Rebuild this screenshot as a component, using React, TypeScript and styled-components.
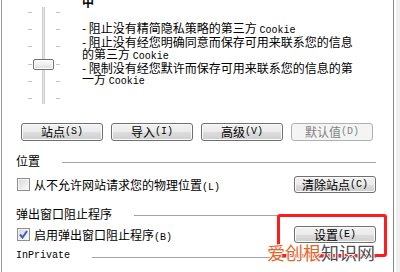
import React from "react";
import styled, { createGlobalStyle } from "styled-components";

const Global = createGlobalStyle`
  html, body { margin: 0; padding: 0; background: #fff; }
  body {
    font-family: "Noto Sans CJK SC", "Liberation Sans", sans-serif;
    font-size: 12px;
    color: #000;
  }
`;

const Screen = styled.div`
  position: relative;
  width: 400px;
  height: 272px;
  overflow: hidden;
  background: #fff;
  display: flex;
`;

const Panel = styled.div`
  margin-left: 1px;
  width: 391px;
  border-left: 1px solid #9c9c9c;
  border-right: 1px solid #86868f;
  display: flex;
  flex-direction: column;
`;

const Gutter = styled.div`
  margin-left: 2px;
  width: 4px;
  background: #efefef;
`;

const Top = styled.div`
  display: flex;
  align-items: flex-start;
  height: 110px;
`;

const SliderBox = styled.div`
  position: relative;
  display: flex;
  width: 34px;
  height: 97px;
  margin-top: 7px;
  margin-left: 25px;
`;

const TickCol = styled.div<{ $ml: number }>`
  display: flex;
  flex-direction: column;
  justify-content: space-between;
  width: 4px;
  margin-left: ${(p) => p.$ml}px;
  padding: 5px 0;
  box-sizing: border-box;
  height: 100%;
`;

const Tick = styled.div`
  height: 1px;
  background: #c4c4c4;
`;

const Track = styled.div`
  margin-left: 10px;
  width: 3px;
  height: 100%;
  background: #e4e4e4;
  box-shadow: inset 1px 0 0 #cfcfcf, inset -1px 0 0 #cfcfcf;
`;

const Thumb = styled.div`
  position: absolute;
  left: 6px;
  top: 52px;
  width: 21px;
  height: 11px;
  box-sizing: border-box;
  border: 1px solid #707070;
  border-radius: 2px;
  background: linear-gradient(#fbfbfb 0%, #eeeeee 50%, #dcdcdc 100%);
  box-shadow: inset 0 0 0 1px #fff;
`;

const TextCol = styled.div`
  margin-left: 21px;
  margin-top: -4px;
  display: flex;
  flex-direction: column;
  white-space: nowrap;
`;

const Level = styled.div`
  font-weight: bold;
  line-height: 12px;
  margin-bottom: 14px;
`;

const Desc = styled.div`
  line-height: 11.25px;
`;

const Lat = styled.span`
  font-family: "Liberation Mono", monospace;
  font-size: 10px;
`;

const ButtonRow = styled.div`
  display: flex;
  gap: 8px;
  margin-top: 13px;
  padding-left: 19px;
  height: 18px;
`;

const Btn = styled.div<{ $disabled?: boolean; $h?: number }>`
  width: 82px;
  height: ${(p) => p.$h ?? 18}px;
  box-sizing: border-box;
  display: flex;
  align-items: center;
  justify-content: center;
  border: 1px solid ${(p) => (p.$disabled ? "#adb2b5" : "#707070")};
  border-radius: 3px;
  background: ${(p) =>
    p.$disabled
      ? "#f4f4f4"
      : "linear-gradient(#f2f2f2 0%, #ebebeb 50%, #dddddd 51%, #cfcfcf 100%)"};
  box-shadow: inset 0 0 0 1px ${(p) => (p.$disabled ? "#f4f4f4" : "#fbfbfb")};
  color: ${(p) => (p.$disabled ? "#838383" : "#000")};
  line-height: 12px;
  white-space: nowrap;
`;

const Header = styled.div<{ $mt: number; $h: number }>`
  display: flex;
  align-items: center;
  gap: 22px;
  margin-top: ${(p) => p.$mt}px;
  height: ${(p) => p.$h}px;
  line-height: ${(p) => p.$h}px;
  padding-left: 14px;
  margin-right: 17px;
  white-space: nowrap;
`;

const Rule = styled.div<{ $off: number }>`
  flex: 1;
  height: 1px;
  background: #a3a3a3;
  margin-top: ${(p) => p.$off}px;
`;

const MonoTitle = styled.span`
  font-family: "Liberation Mono", monospace;
  font-size: 10px;
`;

const CheckRow = styled.div<{ $mt: number }>`
  display: flex;
  align-items: center;
  justify-content: space-between;
  margin-top: ${(p) => p.$mt}px;
  height: 17px;
  padding-left: 15px;
  margin-right: 17px;
`;

const CheckLabel = styled.div`
  display: flex;
  align-items: center;
  gap: 4px;
  white-space: nowrap;
`;

const Box = styled.span`
  position: relative;
  width: 13px;
  height: 13px;
  box-sizing: border-box;
  border: 1px solid #8e8f8f;
  background: linear-gradient(135deg, #d6d6d6 0%, #ebebeb 55%, #fbfbfb 100%);
  box-shadow: inset 0 0 0 1px #f4f4f4;
  display: inline-flex;
  align-items: center;
  justify-content: center;
`;

const RedFrame = styled.div`
  position: absolute;
  left: 277px;
  top: 214px;
  width: 110px;
  height: 43px;
  box-sizing: border-box;
  border: 3px solid #ff1c1c;
  border-radius: 3px;
`;

const Watermark = styled.div`
  position: absolute;
  left: 267px;
  top: 243px;
  font-size: 18px;
  line-height: 18px;
  white-space: nowrap;
  text-shadow: 1px 0 0 #fff, -1px 0 0 #fff, 0 1px 0 #fff, 0 -1px 0 #fff;
`;

const Orange = styled.span`
  color: #e3672b;
`;

const Gray = styled.span`
  color: #4f4f4f;
`;

const CheckMark = () => (
  <svg width="9" height="9" viewBox="0 0 9 9">
    <path d="M1 4.5 L3.5 7.5 L8 1" fill="none" stroke="#3a5fb8" strokeWidth="2" />
  </svg>
);

const Checkbox = ({ checked }: { checked?: boolean }) => (
  <Box>{checked ? <CheckMark /> : null}</Box>
);

export default function App() {
  return (
    <Screen>
      <Global />
      <Panel>
        <Top>
          <SliderBox>
            <TickCol $ml={1}>
              {[0, 1, 2, 3, 4, 5].map((i) => (
                <Tick key={i} />
              ))}
            </TickCol>
            <Track />
            <TickCol $ml={11}>
              {[0, 1, 2, 3, 4, 5].map((i) => (
                <Tick key={i} />
              ))}
            </TickCol>
            <Thumb />
          </SliderBox>
          <TextCol>
            <Level>中</Level>
            <Desc>
              - 阻止没有精简隐私策略的第三方 <Lat>Cookie</Lat>
            </Desc>
            <Desc>- 阻止没有经您明确同意而保存可用来联系您的信息</Desc>
            <Desc>
              的第三方 <Lat>Cookie</Lat>
            </Desc>
            <Desc>- 限制没有经您默许而保存可用来联系您的信息的第</Desc>
            <Desc>
              一方 <Lat>Cookie</Lat>
            </Desc>
          </TextCol>
        </Top>
        <ButtonRow>
          <Btn>
            站点<Lat>(S)</Lat>
          </Btn>
          <Btn>
            导入<Lat>(I)</Lat>
          </Btn>
          <Btn>
            高级<Lat>(V)</Lat>
          </Btn>
          <Btn $disabled>
            默认值<Lat>(D)</Lat>
          </Btn>
        </ButtonRow>
        <Header $mt={13} $h={14}>
          位置
          <Rule $off={3} />
        </Header>
        <CheckRow $mt={8}>
          <CheckLabel>
            <Checkbox />
            <span>
              从不允许网站请求您的物理位置<Lat>(L)</Lat>
            </span>
          </CheckLabel>
          <Btn $h={17}>
            清除站点<Lat>(C)</Lat>
          </Btn>
        </CheckRow>
        <Header $mt={14} $h={14}>
          弹出窗口阻止程序
          <Rule $off={3} />
        </Header>
        <CheckRow $mt={5}>
          <CheckLabel>
            <Checkbox checked />
            <span>
              启用弹出窗口阻止程序<Lat>(B)</Lat>
            </span>
          </CheckLabel>
          <Btn $h={17}>
            设置<Lat>(E)</Lat>
          </Btn>
        </CheckRow>
        <Header $mt={7} $h={12}>
          <MonoTitle>InPrivate</MonoTitle>
          <Rule $off={2} />
        </Header>
      </Panel>
      <Gutter />
      <RedFrame />
      <Watermark>
        <Orange>爱创根</Orange>
        <Gray>知识网</Gray>
      </Watermark>
    </Screen>
  );
}
